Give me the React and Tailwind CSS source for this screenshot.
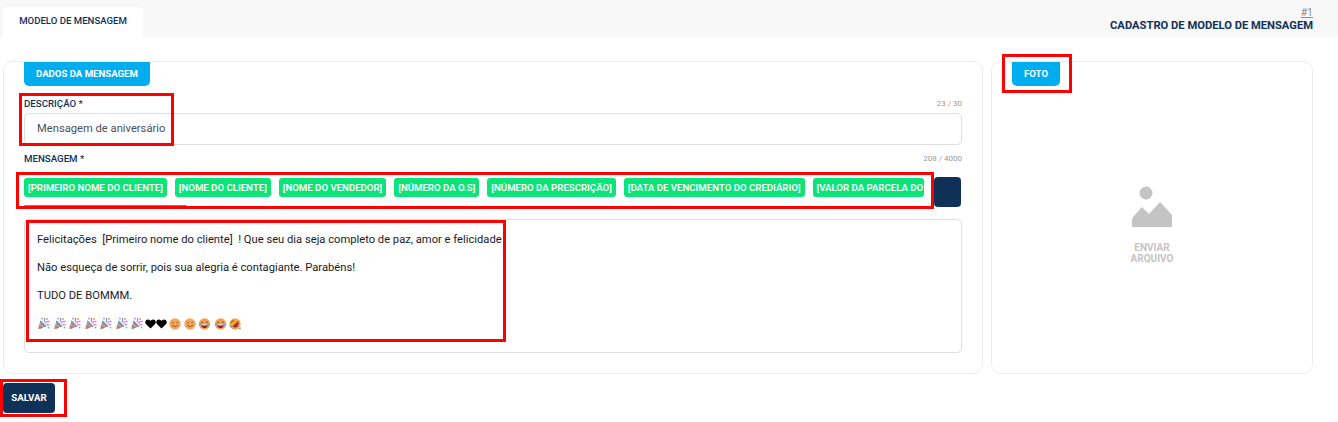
const Popper = () => (
  <svg width="13" height="13" viewBox="0 0 13 13" className="shrink-0">
    <path d="M0.8 12.2 L3.6 3.6 L9.4 9.4 Z" fill="#c9a06a" />
    <path d="M2 8 L6 10.8 L2.6 12 Z" fill="#8f7fb5" />
    <path d="M3.6 3.6 L9.4 9.4 L7.5 10 L3 5.5 Z" fill="#6f8fc0" />
    <path d="M7 5 Q8 3 7.5 1" stroke="#4fa3e0" strokeWidth="1.2" fill="none" />
    <path d="M8 6 Q10 4 12.5 4.5" stroke="#ef6fc0" strokeWidth="1.4" fill="none" />
    <path d="M9 8 Q11 7 12.5 8" stroke="#ef6fc0" strokeWidth="1.2" fill="none" />
    <circle cx="10" cy="2" r="1" fill="#e6a93a" />
    <circle cx="5" cy="1.5" r="0.9" fill="#ef6fc0" />
    <circle cx="11.5" cy="10.5" r="0.9" fill="#6fb7e8" />
  </svg>
);
const Heart = () => (
  <svg width="11" height="10" viewBox="0 0 11 10" className="shrink-0">
    <path d="M5.5 9.6 L0.9 5 C-0.6 3 0.6 0.4 2.9 0.4 C4.2 0.4 5 1.2 5.5 2 C6 1.2 6.8 0.4 8.1 0.4 C10.4 0.4 11.6 3 10.1 5 Z" fill="#000" />
  </svg>
);
const Smile = () => (
  <svg width="12" height="12" viewBox="0 0 12 12" className="shrink-0">
    <circle cx="6" cy="6" r="5.7" fill="#f5a65a" />
    <path d="M2.7 4.8 Q3.7 3.7 4.7 4.8 M7.3 4.8 Q8.3 3.7 9.3 4.8" stroke="#7a4a20" strokeWidth="0.8" fill="none" />
    <path d="M3 7.2 Q6 10.2 9 7.2" stroke="#7a4a20" strokeWidth="0.8" fill="none" />
  </svg>
);
const Laugh = () => (
  <svg width="13" height="12" viewBox="0 0 13 12" className="shrink-0">
    <circle cx="6.5" cy="6" r="5.7" fill="#f5a04f" />
    <path d="M3.2 4.6 Q4.2 3.4 5.2 4.6 M7.8 4.6 Q8.8 3.4 9.8 4.6" stroke="#6a3a1a" strokeWidth="0.8" fill="none" />
    <path d="M3 6.4 H10 Q9.5 10 6.5 10 Q3.5 10 3 6.4 Z" fill="#8a2a3a" />
    <rect x="3.6" y="6.4" width="5.8" height="1" fill="#fff" />
    <path d="M0.5 6 L2.8 5.8 L2.4 8.5 Z M12.5 6 L10.2 5.8 L10.6 8.5 Z" fill="#5aa8e8" />
  </svg>
);
const Rofl = () => (
  <svg width="12" height="12" viewBox="0 0 12 12" className="shrink-0">
    <circle cx="6" cy="6" r="5.7" fill="#f0a83e" />
    <path d="M2.2 5 Q3 2.8 5 2.6" stroke="#6a3a1a" strokeWidth="0.8" fill="none" />
    <path d="M3.5 8.6 L9.2 3 Q10.6 7.6 7.4 9.4 Q5.2 10 3.5 8.6 Z" fill="#a02a5a" />
    <path d="M0.4 8 L2.5 7.5 L2.6 10 Z" fill="#5a8ee8" />
    <path d="M9.5 10.8 L11.6 9 L11.6 11.4 Z" fill="#5a8ee8" />
  </svg>
);
const Tag = ({ children, className = "px-[4px]" }) => (
  <span className={`shrink-0 h-[19px] rounded-[3px] bg-[#0ce47a] text-[9.65px] leading-[19px] font-semibold text-[#fbfffc] whitespace-nowrap ${className}`}>
    {children}
  </span>
);
const Section = ({ children }) => (
  <div className="h-[24px] w-fit rounded-b-[5px] bg-[#00aeef] px-[12px] text-[9.6px] leading-[24px] font-bold text-white">
    {children}
  </div>
);
const Mark = ({ className }) => (
  <div className={`pointer-events-none absolute border-[3px] border-[#ff0000] ${className}`} />
);

export default function App() {
  return (
    <div className="relative h-[422px] w-[1338px] overflow-hidden bg-white font-['Roboto',sans-serif]">
      <header className="flex h-[37px] items-end justify-between bg-[#f8f8f8] pl-[3px] pr-[25px]">
        <div className="flex h-[30px] w-[140px] items-center justify-center rounded-t-[5px] bg-white pb-[1px] text-[9.6px] font-medium text-[#0f3158]">
          MODELO DE MENSAGEM
        </div>
        <div className="flex h-[30px] flex-col items-end pb-[1px]">
          <span className="text-[10.5px] leading-[12px] text-[#8a8f96] underline">#1</span>
          <span className="text-[11.2px] leading-[13px] font-bold text-[#0f3158]">CADASTRO DE MODELO DE MENSAGEM</span>
        </div>
      </header>

      <main className="flex gap-[8px] pl-[3px] pr-[25px] pt-[24px]">
        <section className="h-[313px] w-[980px] rounded-[10px] border border-[#ececec] pl-[20px] pr-[20px]">
          <Section>DADOS DA MENSAGEM</Section>
          <div className="mt-[12px] flex h-[12px] items-center justify-between text-[9.7px]">
            <span className="font-medium text-[#0f3158]">DESCRIÇÃO *</span>
            <span className="text-[8px] text-[#9a9a9a]">23 / 30</span>
          </div>
          <div className="mt-[3px] flex h-[32px] items-center rounded-[5px] border border-[#dedede] pl-[12px] pt-[1px] text-[11.2px] text-[#495057]">
            Mensagem de aniversário
          </div>
          <div className="mt-[7px] flex h-[14px] items-center justify-between text-[9.7px]">
            <span className="font-medium text-[#0f3158]">MENSAGEM *</span>
            <span className="text-[8px] text-[#9a9a9a]">208 / 4000</span>
          </div>
          <div className="mt-[10px] flex items-start">
            <div className="relative h-[31px] w-[900px] shrink-0 overflow-hidden">
              <div className="flex gap-[8px] pt-[2px]">
                <Tag>[PRIMEIRO NOME DO CLIENTE]</Tag>
                <Tag>[NOME DO CLIENTE]</Tag>
                <Tag>[NOME DO VENDEDOR]</Tag>
                <Tag>[NÚMERO DA O.S]</Tag>
                <Tag>[NÚMERO DA PRESCRIÇÃO]</Tag>
                <Tag>[DATA DE VENCIMENTO DO CREDIÁRIO]</Tag>
                <Tag className="pl-[4px] pr-[1px]">[VALOR DA PARCELA DO</Tag>
              </div>
              <div className="absolute bottom-0 left-0 h-[2px] w-[163px] rounded-full bg-[#2f9be0]" />
            </div>
            <div className="ml-[10px] mt-[1px] h-[30px] w-[27px] shrink-0 rounded-[4px] bg-[#0f3158]" />
          </div>
          <div className="mt-[12px] h-[134px] rounded-[5px] border border-[#dedede] pl-[12px] pt-[10px] text-[11.2px] leading-[19px] text-[#1a1a2a]">
            <p className="whitespace-pre">Felicitações  [Primeiro nome do cliente]  ! Que seu dia seja completo de paz, amor e felicidade</p>
            <p className="mt-[9px]">Não esqueça de sorrir, pois sua alegria é contagiante. Parabéns!</p>
            <p className="mt-[9px]">TUDO DE BOMMM.</p>
            <div className="mt-[9px] flex h-[19px] items-center gap-[2.5px]">
              <Popper /><Popper /><Popper /><Popper /><Popper /><Popper /><Popper />
              <span className="-ml-[1px] flex"><Heart /><Heart /></span>
              <Smile /><Smile /><Laugh /><Laugh /><Rofl />
            </div>
          </div>
        </section>

        <section className="h-[313px] w-[322px] rounded-[10px] border border-[#ececec] pl-[20px]">
          <Section>FOTO</Section>
          <div className="flex flex-col items-center pt-[99px] pr-[20px]">
            <svg width="42" height="42" viewBox="0 0 42 42">
              <circle cx="15" cy="8" r="6.5" fill="#c4c4c4" />
              <path d="M1 42 V35 Q1 33 2.5 31.5 L11 22 L18 29 L29 17 L41 30 V42 Z" fill="#c4c4c4" />
            </svg>
            <div className="mt-[15px] text-center text-[10px] leading-[11px] font-bold text-[#c4c4c4]">ENVIAR<br />ARQUIVO</div>
          </div>
        </section>
      </main>

      <button className="ml-[3px] mt-[9px] block h-[30px] w-[52px] rounded-[4px] bg-[#0f3158] text-[9.7px] font-bold text-white">SALVAR</button>

      <Mark className="left-[19px] top-[93px] h-[53px] w-[155px]" />
      <Mark className="left-[16px] top-[172px] h-[37px] w-[918px]" />
      <Mark className="left-[26px] top-[220px] h-[122px] w-[480px]" />
      <Mark className="left-[1002px] top-[54px] h-[39px] w-[70px]" />
      <Mark className="left-0 top-[379px] h-[38px] w-[67px]" />
    </div>
  );
}
